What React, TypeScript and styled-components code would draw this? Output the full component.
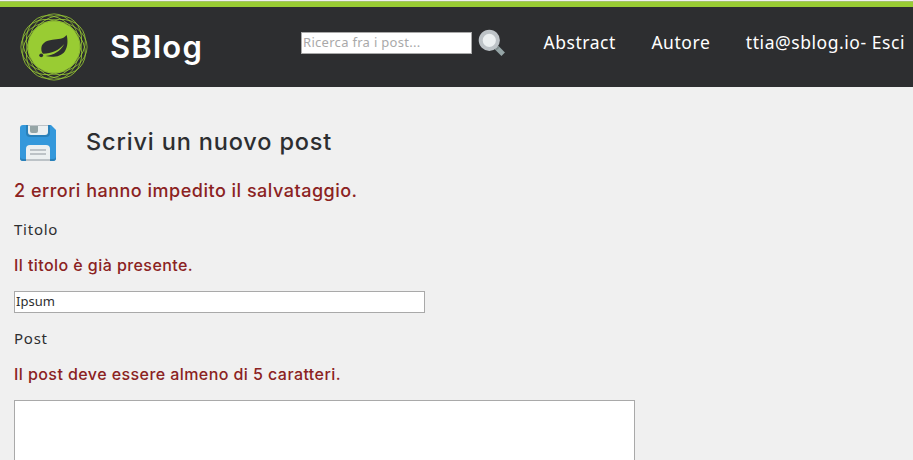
import React from "react";
import styled, { createGlobalStyle } from "styled-components";

const GlobalStyle = createGlobalStyle`
  *, *::before, *::after { box-sizing: border-box; }
  body {
    margin: 0;
    background: #f0f0f0;
    color: #2d2e30;
    font-family: "Noto Sans", sans-serif;
  }
`;

const Page = styled.div`
  display: flex;
  flex-direction: column;
  height: 460px;
  padding-top: 2px;
`;

const Header = styled.header`
  display: flex;
  flex: none;
  height: 85px;
  padding: 0 8px 0 19px;
  border-top: 5px solid #99cc33;
  box-shadow: 0 -1px 0 #a3c266;
  background: #2d2e30;
  white-space: nowrap;
`;

const Logo = styled.svg`
  flex: none;
  width: 70px;
  height: 70px;
  margin-top: 5px;
`;

const Brand = styled.div`
  width: 189px;
  margin: 21px 0 0 21px;
  color: #fff;
  font: 600 31px/38px Inter, sans-serif;
  letter-spacing: 1.2px;
`;

const Search = styled.form`
  display: flex;
  align-items: flex-start;
  margin: 25px 0 0 2px;
`;

const Field = styled.input<{ $width: number; $tracking?: number }>`
  display: block;
  width: ${(p) => p.$width}px;
  height: 22px;
  padding: 0 1px 2px;
  border: 1px solid #a9a9a9;
  border-radius: 0;
  outline: none;
  background: #fff;
  color: #2d2e30;
  font: 13px/18px "Noto Sans", sans-serif;
  letter-spacing: ${(p) => p.$tracking ?? 0}px;

  &::placeholder { color: #a9a9a9; opacity: 1; }
`;

const SearchIcon = styled.svg`
  width: 28px;
  height: 28px;
  margin: -3px 0 0 6px;
`;

const Nav = styled.nav`
  display: flex;
  gap: 35.5px;
  margin: 23px 0 0 auto;
`;

const NavLink = styled.a`
  color: #fff;
  font-size: 17.5px;
  line-height: 24px;
  letter-spacing: 0.55px;
`;

const Main = styled.main`
  display: flex;
  flex: 1;
  flex-direction: column;
  min-height: 0;
  padding: 38px 14px 0;
`;

const TitleRow = styled.div`
  display: flex;
  height: 36px;
  padding-left: 6px;
`;

const SaveIcon = styled.svg`
  width: 36px;
  height: 36px;
`;

const Title = styled.h1`
  margin: 0 0 0 30px;
  font: 500 23.5px/34px Inter, sans-serif;
  letter-spacing: 0.85px;
`;

const Summary = styled.h2`
  margin: 18px 0 1px;
  color: #8b2222;
  font: 500 18px/24px Inter, sans-serif;
  letter-spacing: 0.5px;
`;

const Label = styled.label`
  display: block;
  margin-top: 15px;
  font-size: 15px;
  line-height: 20px;
  letter-spacing: 0.75px;
`;

const FieldError = styled.p`
  margin: 16px 0 15px;
  color: #8b2222;
  font: 500 16px/21px Inter, sans-serif;
  letter-spacing: 0.43px;
`;

const PostArea = styled.textarea`
  display: block;
  flex: 1;
  width: 621px;
  min-height: 0;
  padding: 2px;
  border: 1px solid #a9a9a9;
  border-bottom: 0;
  border-radius: 0;
  outline: none;
  resize: none;
  background: #fff;
`;

const ringAngles = [0, 30, 60, 90, 120, 150];

export default function App() {
  return (
    <>
      <GlobalStyle />
      <Page>
        <Header>
          <Logo viewBox="19 12 70 70" aria-hidden="true">
            <g fill="none" stroke="#99cc33" strokeWidth="0.75">
              {ringAngles.map((a) => (
                <ellipse key={a} cx="54" cy="47" rx="33.1" ry="25.6" transform={`rotate(${a} 54 47)`} />
              ))}
            </g>
            <circle cx="54" cy="47" r="25.8" fill="#99cc33" />
            <path
              d="M66.6 35.1C63.8 39.2 57.5 39.2 52.5 39.7C45.5 40.4 41.3 43.7 41.3 48.8C41.3 51.2 42 52.8 43.2 53.8C51.5 53.8 58.7 50.5 64.3 44.1C60.5 51.1 54 55.3 45.6 56.1C53 57.7 61 56.8 64.9 51.2C68.1 46.6 67.9 39.8 66.6 35.1Z"
              fill="#2d2e30"
            />
            <circle cx="41.2" cy="55.3" r="1.9" fill="#2d2e30" />
          </Logo>
          <Brand>SBlog</Brand>
          <Search>
            <Field $width={171} $tracking={0.3} placeholder="Ricerca fra i post..." />
            <SearchIcon viewBox="0 0 28 28" aria-hidden="true">
              <path d="M17.5 17.5L25.2 25.2" stroke="#95a5a6" strokeWidth="5" />
              <path d="M17.5 17.5L20 20" stroke="#7f8c8d" strokeWidth="4.5" />
              <circle cx="11.3" cy="11.3" r="8.6" fill="#ecf0f1" stroke="#bdc3c7" strokeWidth="4" />
            </SearchIcon>
          </Search>
          <Nav>
            <NavLink>Abstract</NavLink>
            <NavLink>Autore</NavLink>
            <NavLink>ttia@sblog.io- Esci</NavLink>
          </Nav>
        </Header>
        <Main>
          <TitleRow>
            <SaveIcon viewBox="0 0 36 36" aria-hidden="true">
              <path d="M3 0H31L36 5V33Q36 36 33 36H3Q0 36 0 33V3Q0 0 3 0Z" fill="#3498db" />
              <path d="M0 31V33Q0 36 3 36H33Q36 36 36 33V31Q36 34 33 34H3Q0 34 0 31Z" fill="#2980b9" />
              <path d="M6 0H30V8Q30 12 26 12H10Q6 12 6 8Z" fill="#2980b9" />
              <path d="M8 0H28V7Q28 10 25 10H11Q8 10 8 7Z" fill="#ecf0f1" />
              <path d="M10 0H18V6Q18 8 16 8H12Q10 8 10 6Z" fill="#95a5a6" />
              <path d="M8 0H28V1H8Z" fill="#bdc3c7" />
              <path d="M6 36V24Q6 20 10 20H26Q30 20 30 24V36Z" fill="#ecf0f1" />
              <path d="M6 34H30V36H6ZM10 24H26V26H10ZM10 28H26V30H10Z" fill="#bdc3c7" />
            </SaveIcon>
            <Title>Scrivi un nuovo post</Title>
          </TitleRow>
          <Summary>2 errori hanno impedito il salvataggio.</Summary>
          <Label htmlFor="title">Titolo</Label>
          <FieldError>Il titolo è già presente.</FieldError>
          <Field id="title" $width={411} defaultValue="Ipsum" />
          <Label htmlFor="post">Post</Label>
          <FieldError>Il post deve essere almeno di 5 caratteri.</FieldError>
          <PostArea id="post" />
        </Main>
      </Page>
    </>
  );
}
